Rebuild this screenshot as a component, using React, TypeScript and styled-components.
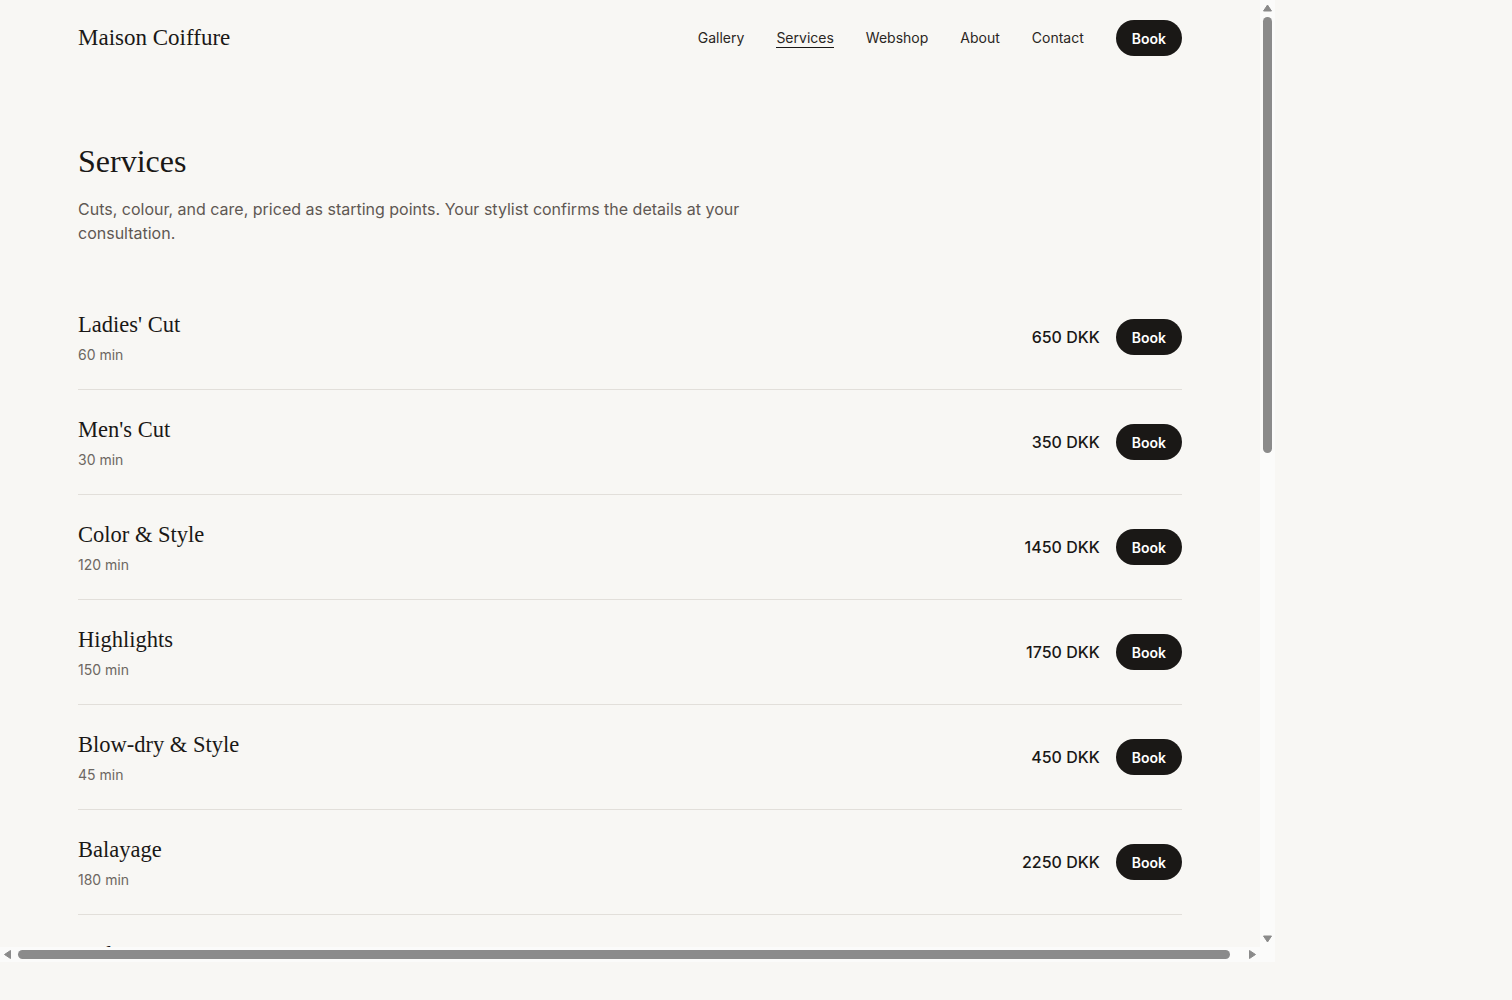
import React from 'react';
import styled, { createGlobalStyle } from 'styled-components';

const colors = {
  bg: '#f8f7f4',
  ink: '#1a1816',
  text: '#2a2623',
  muted: '#5f5853',
  meta: '#6d6762',
  line: '#e2dfda',
  track: '#fbfbfa',
  thumb: '#8b8b8b',
};

const GlobalStyle = createGlobalStyle`
  html, body {
    margin: 0;
    padding: 0;
    background: ${colors.bg};
  }
  * {
    box-sizing: border-box;
  }
`;

// Browser window: page area plus classic scrollbars
const Viewport = styled.div`
  display: grid;
  grid-template-columns: 1260px 15px;
  grid-template-rows: 947px 15px;
  width: 1275px;
  height: 962px;
  background: ${colors.bg};
  font-family: Inter, 'Noto Sans', sans-serif;
  color: ${colors.text};
`;

const Scroller = styled.div`
  overflow: hidden;
`;

const ScrollBar = styled.div<{ $dir: 'v' | 'h' }>`
  display: flex;
  flex-direction: ${props => (props.$dir === 'v' ? 'column' : 'row')};
  background: ${colors.track};
`;

const ScrollArrow = styled.div`
  flex: 0 0 15px;
  width: 15px;
  height: 15px;
  display: flex;
  align-items: center;
  justify-content: center;
`;

const Track = styled.div`
  flex: 1;
  display: flex;
`;

const Thumb = styled.div<{ $dir: 'v' | 'h' }>`
  background: ${colors.thumb};
  border-radius: 5px;
  ${props =>
    props.$dir === 'v'
      ? 'width: 9px; height: 436px; margin: 2px 3px;'
      : 'height: 9px; width: 1212px; margin: 3px 3px;'}
`;

const Corner = styled.div`
  background: ${colors.track};
`;

const Page = styled.div`
  width: 1279px;
`;

const Shell = styled.div`
  width: 1104px;
  margin-left: 78px;
`;

const Header = styled.header`
  display: flex;
  align-items: center;
  justify-content: space-between;
  padding: 20px 0;
`;

const Logo = styled.a`
  font-family: 'Liberation Serif', 'DejaVu Serif', serif;
  font-size: 23px;
  color: ${colors.ink};
  text-decoration: none;
`;

const Nav = styled.nav`
  display: flex;
  align-items: center;
  gap: 32px;
`;

const NavLink = styled.a<{ $active?: boolean }>`
  font-size: 14px;
  line-height: 17px;
  color: ${colors.text};
  text-decoration: none;
  padding: 1px 0 1.5px;
  border-bottom: 1.5px solid ${props => (props.$active ? colors.ink : 'transparent')};
`;

const BookButton = styled.button`
  height: 36px;
  padding: 0 16px;
  border: none;
  border-radius: 18px;
  background: ${colors.ink};
  color: #fff;
  font-family: Inter, sans-serif;
  font-size: 14px;
  font-weight: 600;
  cursor: pointer;
`;

const Intro = styled.section`
  padding-top: 66px;
`;

const Title = styled.h1`
  margin: 0;
  font-family: 'Liberation Serif', 'DejaVu Serif', serif;
  font-weight: 400;
  font-size: 32px;
  line-height: 38px;
  color: ${colors.ink};
`;

const Lead = styled.p`
  margin: 17px 0 0;
  max-width: 720px;
  font-size: 16px;
  line-height: 24px;
  color: ${colors.muted};
`;

const List = styled.ul`
  list-style: none;
  margin: 40px 0 0;
  padding: 0;
`;

const Row = styled.li`
  display: flex;
  align-items: center;
  justify-content: space-between;
  padding: 26px 0 24px;
  border-bottom: 1px solid ${colors.line};
`;

const ServiceName = styled.h3`
  margin: 0;
  font-family: 'Liberation Serif', 'DejaVu Serif', serif;
  font-weight: 400;
  font-size: 22.5px;
  line-height: 28px;
  color: ${colors.ink};
`;

const Duration = styled.div`
  margin-top: 6px;
  font-size: 14px;
  line-height: 20px;
  color: ${colors.meta};
`;

const Actions = styled.div`
  display: flex;
  align-items: center;
  gap: 16px;
  margin-top: -2px;
`;

const Price = styled.span`
  font-size: 16px;
  font-weight: 500;
  color: ${colors.ink};
`;

const Footer = styled.footer`
  margin-top: 160px;
  padding: 40px 0 60px;
  border-top: 1px solid ${colors.line};
  display: flex;
  justify-content: space-between;
  font-size: 14px;
  color: ${colors.meta};
`;

const Triangle = ({ points }: { points: string }) => (
  <svg width="15" height="15" viewBox="0 0 15 15">
    <polygon points={points} fill={colors.thumb} stroke={colors.thumb} strokeWidth="1" strokeLinejoin="round" />
  </svg>
);

const services = [
  { name: "Ladies' Cut", duration: '60 min', price: '650 DKK' },
  { name: "Men's Cut", duration: '30 min', price: '350 DKK' },
  { name: 'Color & Style', duration: '120 min', price: '1450 DKK' },
  { name: 'Highlights', duration: '150 min', price: '1750 DKK' },
  { name: 'Blow-dry & Style', duration: '45 min', price: '450 DKK' },
  { name: 'Balayage', duration: '180 min', price: '2250 DKK' },
  { name: "Kids' Cut", duration: '30 min', price: '250 DKK' },
  { name: 'Keratin Treatment', duration: '150 min', price: '1950 DKK' },
  { name: 'Scalp Treatment', duration: '45 min', price: '550 DKK' },
  { name: 'Beard Trim', duration: '20 min', price: '200 DKK' },
  { name: 'Bridal Styling', duration: '90 min', price: '1200 DKK' },
];

const navItems = ['Gallery', 'Services', 'Webshop', 'About', 'Contact'];

export default function App() {
  return (
    <>
      <GlobalStyle />
      <Viewport>
        <Scroller>
          <Page>
            <Shell>
              <Header>
                <Logo href="#">Maison Coiffure</Logo>
                <Nav>
                  {navItems.map(item => (
                    <NavLink key={item} href="#" $active={item === 'Services'}>
                      {item}
                    </NavLink>
                  ))}
                  <BookButton>Book</BookButton>
                </Nav>
              </Header>

              <Intro>
                <Title>Services</Title>
                <Lead>
                  Cuts, colour, and care, priced as starting points. Your stylist confirms the details at your
                  consultation.
                </Lead>
              </Intro>

              <List>
                {services.map(service => (
                  <Row key={service.name}>
                    <div>
                      <ServiceName>{service.name}</ServiceName>
                      <Duration>{service.duration}</Duration>
                    </div>
                    <Actions>
                      <Price>{service.price}</Price>
                      <BookButton>Book</BookButton>
                    </Actions>
                  </Row>
                ))}
              </List>

              <Footer>
                <span>© Maison Coiffure</span>
                <span>Copenhagen</span>
              </Footer>
            </Shell>
          </Page>
        </Scroller>

        <ScrollBar $dir="v">
          <ScrollArrow>
            <Triangle points="7.5,5 11.5,11 3.5,11" />
          </ScrollArrow>
          <Track>
            <Thumb $dir="v" />
          </Track>
          <ScrollArrow>
            <Triangle points="3.5,4 11.5,4 7.5,10" />
          </ScrollArrow>
        </ScrollBar>

        <ScrollBar $dir="h">
          <ScrollArrow>
            <Triangle points="4.5,7.5 10.5,3.5 10.5,11.5" />
          </ScrollArrow>
          <Track>
            <Thumb $dir="h" />
          </Track>
          <ScrollArrow>
            <Triangle points="4.5,3.5 10.5,7.5 4.5,11.5" />
          </ScrollArrow>
        </ScrollBar>

        <Corner />
      </Viewport>
    </>
  );
}
